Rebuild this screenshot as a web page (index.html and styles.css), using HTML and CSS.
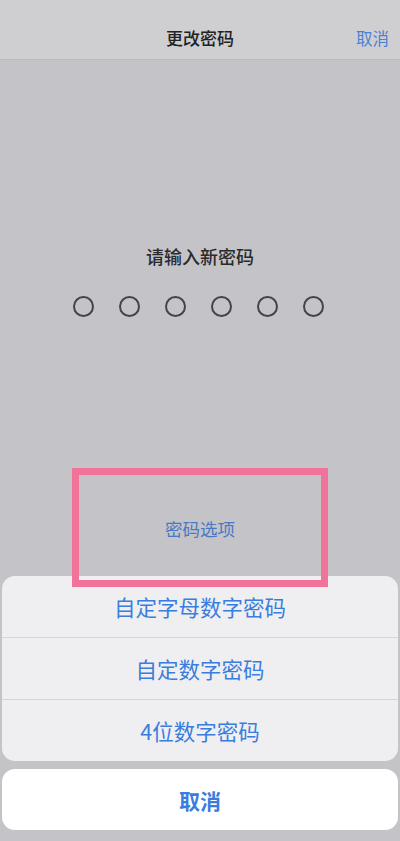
FILE: index.html
```html
<!DOCTYPE html>
<html lang="zh-CN">
<head>
    <meta charset="UTF-8">
    <meta name="viewport" content="width=device-width, initial-scale=1.0">
    <title>更改密码</title>
    <link rel="stylesheet" href="styles.css">
</head>
<body>

<div class="screen">
    <div class="nav-bar">
        <span></span>
        <span class="nav-title">更改密码</span>
        <span class="nav-cancel">取消</span>
    </div>

    <div class="passcode">
        <p class="prompt">请输入新密码</p>
        <div class="dots">
            <span class="dot"></span>
            <span class="dot"></span>
            <span class="dot"></span>
            <span class="dot"></span>
            <span class="dot"></span>
            <span class="dot"></span>
        </div>
    </div>

    <div class="options-title">
        密码选项
        <div class="highlight"></div>
    </div>

    <div class="sheet">
        <div class="sheet-group">
            <div class="sheet-item">自定字母数字密码</div>
            <div class="sheet-item">自定数字密码</div>
            <div class="sheet-item">4位数字密码</div>
        </div>
        <div class="sheet-cancel">取消</div>
    </div>
</div>

</body>
</html>
```

FILE: styles.css
```css
body {
    margin: 0;
    background: #c4c4c8;
    font-family: "Noto Sans CJK SC", "Noto Sans", sans-serif;
}
.screen {
    display: flex;
    flex-direction: column;
    height: 841px;
    overflow: hidden;
}
.nav-bar {
    display: grid;
    grid-template-columns: 1fr auto 1fr;
    align-items: center;
    height: 60px;
    padding-top: 16px;
    box-sizing: border-box;
    background: #cfcfd2;
    border-bottom: 1px solid #b9b9bd;
}
.nav-title {
    font-size: 17px;
    font-weight: 500;
    color: #222;
}
.nav-cancel {
    text-align: right;
    padding-right: 11px;
    font-size: 16.5px;
    color: #4a82d2;
}
.passcode {
    flex: 1;
    padding-top: 184px;
}
.prompt {
    margin: 0;
    text-align: center;
    font-size: 18px;
    line-height: 24px;
    font-weight: 500;
    color: #2a2a2c;
}
.dots {
    display: flex;
    justify-content: center;
    gap: 25px;
    margin-top: 28px;
    padding-right: 3px;
}
.dot {
    width: 17px;
    height: 17px;
    border: 2px solid #444446;
    border-radius: 50%;
}
.options-title {
    position: relative;
    height: 96px;
    display: flex;
    align-items: center;
    justify-content: center;
    font-size: 17.5px;
    color: #4b78c2;
}
.highlight {
    position: absolute;
    left: 72px;
    top: -12px;
    width: 256px;
    height: 119px;
    box-sizing: border-box;
    border: 7px solid #f1739a;
    z-index: 2;
}
.sheet {
    padding: 0 2px 11px;
}
.sheet-group {
    background: #efeff2;
    border-radius: 13px;
    overflow: hidden;
}
.sheet-item {
    height: 61px;
    display: flex;
    align-items: center;
    justify-content: center;
    font-size: 21.5px;
    color: #3b7ddd;
    border-top: 1px solid #d6d6da;
}
.sheet-item:first-child {
    border-top: none;
}
.sheet-cancel {
    margin-top: 8px;
    height: 61px;
    display: flex;
    align-items: center;
    justify-content: center;
    background: #fff;
    border-radius: 13px;
    font-size: 21px;
    font-weight: 700;
    color: #3b7ddd;
}
```
